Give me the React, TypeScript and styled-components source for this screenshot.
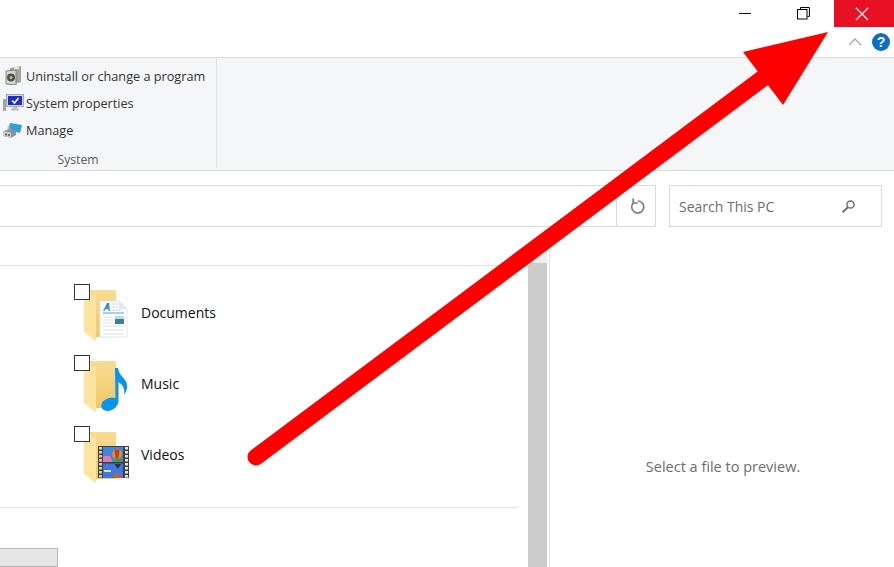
import React from "react";
import styled, { createGlobalStyle } from "styled-components";

const GlobalStyle = createGlobalStyle`
  html, body {
    margin: 0;
    padding: 0;
    background: #fff;
  }
  body {
    font-family: "Open Sans", "Noto Sans", sans-serif;
  }
`;

const App = () => (
  <Page>
    <GlobalStyle />
    <TitleBar>
      <TitleSpacer />
      <WindowButton aria-label="Minimize">
        <svg width="12" height="13" viewBox="0 0 12 13"><path d="M0 6.5h12" stroke="#000" strokeWidth="1" /></svg>
      </WindowButton>
      <WindowButton aria-label="Restore">
        <svg width="13" height="13" viewBox="0 0 13 13" fill="none" stroke="#000">
          <path d="M3.5 2.5v-2h8.900v8.900h-2" />
          <rect x="0.5" y="2.5" width="9.500" height="9.500" />
        </svg>
      </WindowButton>
      <CloseButton aria-label="Close">
        <svg width="14" height="14" viewBox="0 0 14 14"><path d="M1 1l12 12M13 1L1 13" stroke="#fff" strokeWidth="1.2" /></svg>
      </CloseButton>
      <HelpRow>
        <svg width="14" height="9" viewBox="0 0 14 9" fill="none"><path d="M1 8l6-6 6 6" stroke="#a9a9a9" strokeWidth="1.4" /></svg>
        <HelpBadge>?</HelpBadge>
      </HelpRow>
    </TitleBar>

    <Ribbon>
      <RibbonGroup>
        <RibbonRows>
          <RibbonRow><IconSlot><UninstallIcon /></IconSlot>Uninstall or change a program</RibbonRow>
          <RibbonRow><IconSlot><SystemIcon /></IconSlot>System properties</RibbonRow>
          <RibbonRow><IconSlot><ManageIcon /></IconSlot>Manage</RibbonRow>
        </RibbonRows>
        <GroupLabel>System</GroupLabel>
      </RibbonGroup>
    </Ribbon>

    <AddressRow>
      <AddressBox>
        <RefreshCell>
          <svg width="15" height="16" viewBox="0 0 15 16" fill="none" stroke="#7d7d7d" strokeWidth="1.700">
            <path d="M3.600 4.600A6 6 0 1 0 8 3" />
            <path d="M3.200 0.500V5H7.800" />
          </svg>
        </RefreshCell>
      </AddressBox>
      <SearchBox>
        <span>Search This PC</span>
        <svg width="15" height="15" viewBox="0 0 15 15" fill="none" stroke="#6e6e6e">
          <circle cx="9.500" cy="5.500" r="3.600" strokeWidth="1.500" />
          <path d="M6.800 8.200L1.600 13.400" strokeWidth="2" />
        </svg>
      </SearchBox>
    </AddressRow>

    <Body>
      <FilesPane>
        <FileSection>
          <FileItem><Check /><DocumentsIcon /><FileName>Documents</FileName></FileItem>
          <FileItem><Check /><MusicIcon /><FileName>Music</FileName></FileItem>
          <FileItem><Check /><VideosIcon /><FileName>Videos</FileName></FileItem>
        </FileSection>
        <DriveBar />
      </FilesPane>
      <Scrollbar>
        <ScrollButton />
        <ScrollThumb />
      </Scrollbar>
      <PreviewPane>Select a file to preview.</PreviewPane>
    </Body>

    <ArrowOverlay width="894" height="567" viewBox="0 0 894 567">
      <path d="M256 457L770 73" stroke="#ff0000" strokeWidth="17" strokeLinecap="round" fill="none" />
      <polygon points="828,32 743,52 783,105" fill="#ff0000" />
    </ArrowOverlay>
  </Page>
);

const FolderBase = ({ children }: { children?: React.ReactNode }) => (
  <IconSvg width="50" height="58" viewBox="0 0 50 58">
    <defs>
      <linearGradient id="folderBack" x1="0" y1="0" x2="0" y2="1">
        <stop offset="0" stopColor="#f9dc92" />
        <stop offset="1" stopColor="#eec868" />
      </linearGradient>
    </defs>
    <path d="M9 6h25a1 1 0 0 1 1 1v46H15z" fill="url(#folderBack)" />
    <path d="M3 15l12-4v46l-2-1-10-8z" fill="#fde59f" />
    {children}
  </IconSvg>
);

const DocumentsIcon = () => (
  <FolderBase>
    <path d="M19 17h19l8 8v28H19z" fill="#fff" stroke="#e1e4e7" strokeWidth="1" />
    <path d="M38 17v8h8z" fill="#e4e8ec" />
    <path d="M26 19h2l1 8h-1.500l-.3-2h-2.500l-1.200 2H22z" fill="#3d8bd8" />
    <path d="M31 20h6M31 23h6M31 26h9" stroke="#c9d6e2" strokeWidth="1" />
    <path d="M22 29h21" stroke="#4aa3e6" strokeWidth="1" />
    <path d="M22 33h10M22 36h10M22 39h10M22 42h21M22 46h21M22 50h21" stroke="#d8e2ea" strokeWidth="1" />
    <rect x="34" y="32" width="9" height="8" fill="#3e7f99" />
    <rect x="34" y="32" width="9" height="3" fill="#bcdcea" />
  </FolderBase>
);

const MusicIcon = () => (
  <FolderBase>
    <path d="M34 13h3c1 6 4 8 7 12 3 4 3 9-1 15 1-6-1-10-5.500-13v19c0 5-6 10-11 10s-7.500-4-5.500-8 8-6 13.500-5z" fill="#0a93ec" />
  </FolderBase>
);

const FILM_HOLES = [21, 25, 29, 33, 37, 41, 45, 49];

const VideosIcon = () => (
  <FolderBase>
    <rect x="17" y="20" width="31" height="32" fill="#3f3f3f" />
    {FILM_HOLES.map(y => (
      <g key={y}>
        <rect x="18" y={y} width="3" height="2.500" fill="#d5cfae" />
        <rect x="44" y={y} width="3" height="2.500" fill="#e6e6e6" />
      </g>
    ))}
    <rect x="22" y="21" width="20" height="15" fill="#3f86dc" />
    <rect x="22" y="37.500" width="20" height="14.500" fill="#3f78dc" />
    <path d="M22 30h7l3 6H22z" fill="#d97bb4" />
    <path d="M30 36l5-3h7v3z" fill="#3f9a5a" />
    <circle cx="36" cy="28" r="5" fill="#d9912c" />
    <path d="M33.500 23.500h5l-1 9h-3z" fill="#c43c2a" />
    <path d="M33.500 38h6.500l-3.200 5z" fill="#2c2f4a" />
    <path d="M31.500 52a4.500 4.500 0 0 1 9 0z" fill="#c9602a" />
    <path d="M23 44h7v2h-7z" fill="#dfe5a0" />
  </FolderBase>
);

const UninstallIcon = () => (
  <svg width="17" height="19" viewBox="0 0 17 19">
    <path d="M5 2l11-2v16l-11 3z" fill="#a4a29a" />
    <path d="M9 .800l5-.800v3l-5 .800z" fill="#e6e5e0" />
    <path d="M1 5l10-1v15L1 18z" fill="#d7d7d2" stroke="#6f6f6c" strokeWidth="0.800" />
    <circle cx="6" cy="11.500" r="4" fill="#4d5256" />
    <circle cx="6" cy="11.500" r="1.500" fill="#e2bd63" />
  </svg>
);

const SystemIcon = () => (
  <svg width="21" height="18" viewBox="0 0 21 18">
    <rect x="0" y="5" width="3" height="12" fill="#a2a6a8" />
    <rect x="0.700" y="6.500" width="1.600" height="1.600" fill="#57c84d" />
    <rect x="3.500" y="0.500" width="17" height="12" fill="#d2d5d7" stroke="#8d9396" strokeWidth="0.700" />
    <rect x="5" y="2" width="14" height="9" fill="#1a2fcf" />
    <path d="M9 6.500l2.500 2.500 4-5" stroke="#fff" strokeWidth="1.600" fill="none" />
    <path d="M10 13h4l2.500 3.500h-9z" fill="#bcc0c2" />
  </svg>
);

const ManageIcon = () => (
  <svg width="20" height="16" viewBox="0 0 20 16">
    <path d="M7 1l12 2-2 8-10-2.500z" fill="#2f9fe0" />
    <path d="M7 1L4 7l3 2z" fill="#8fb9d6" />
    <path d="M0 9l8-2 5 2v4l-5 3-8-2z" fill="#8f9294" />
    <path d="M0 9l8 1.600V16l-8-2z" fill="#c9cbcc" />
    <circle cx="3" cy="12.500" r="1" fill="#555" />
    <circle cx="6" cy="13" r="1" fill="#555" />
  </svg>
);

const Page = styled.div`
  position: relative;
  width: 894px;
  height: 567px;
  overflow: hidden;
  background: #fff;
`;

const TitleBar = styled.div`
  height: 57px;
  display: grid;
  grid-template-columns: 1fr 54px 62px 60px;
  grid-template-rows: 27px 30px;
  background: #fff;
  border-bottom: 1px solid #dadbdc;
`;

const TitleSpacer = styled.div``;

const WindowButton = styled.div`
  display: flex;
  align-items: center;
  justify-content: center;
`;

const CloseButton = styled(WindowButton)`
  background: #e81123;
  padding-right: 4px;
`;

const HelpRow = styled.div`
  grid-column: 3 / 5;
  grid-row: 2;
  display: flex;
  align-items: center;
  justify-content: flex-end;
  gap: 10px;
  padding: 0 4px 1px 0;
`;

const HelpBadge = styled.div`
  width: 18px;
  height: 18px;
  border-radius: 50%;
  background: #0b6fc6;
  color: #fff;
  font: bold 14px/18px "Liberation Sans", sans-serif;
  text-align: center;
`;

const Ribbon = styled.div`
  height: 112px;
  background: #f5f6f7;
  border-bottom: 1px solid #dadbdc;
`;

const RibbonGroup = styled.div`
  width: 216px;
  height: 108px;
  padding-top: 2px;
  border-right: 1px solid #e1e3e6;
  display: flex;
  flex-direction: column;
`;

const RibbonRows = styled.div`
  display: flex;
  flex-direction: column;
  padding: 2px 0 0 2px;
  flex: 1;
`;

const RibbonRow = styled.div`
  height: 27px;
  display: flex;
  align-items: center;
  gap: 2px;
  font-size: 12.7px;
  color: #333;
`;

const IconSlot = styled.div`
  width: 22px;
  display: flex;
  justify-content: center;
  flex: none;
`;

const GroupLabel = styled.div`
  font-size: 12.2px;
  line-height: 16px;
  color: #5c5c5c;
  text-align: center;
  width: 156px;
`;

const AddressRow = styled.div`
  height: 42px;
  padding-top: 14px;
  display: flex;
  align-items: stretch;
  gap: 13px;
`;

const AddressBox = styled.div`
  width: 656px;
  box-sizing: border-box;
  border: 1px solid #d9d9d9;
  border-left: none;
  display: flex;
  justify-content: flex-end;
`;

const RefreshCell = styled.div`
  width: 39px;
  box-sizing: border-box;
  padding-left: 2px;
  border-left: 1px solid #d9d9d9;
  display: flex;
  align-items: center;
  justify-content: center;
`;

const SearchBox = styled.div`
  width: 213px;
  box-sizing: border-box;
  border: 1px solid #d9d9d9;
  padding: 0 25px 0 9px;
  display: flex;
  align-items: center;
  justify-content: space-between;
  font-size: 14px;
  color: #6d6d6d;
`;

const Body = styled.div`
  display: flex;
  height: 340px;
`;

const FilesPane = styled.div`
  width: 528px;
  display: flex;
  flex-direction: column;
`;

const FileSection = styled.div`
  width: 518px;
  height: 243px;
  margin-top: 38px;
  border-top: 1px solid #e3e3e3;
  border-bottom: 1px solid #e3e3e3;
  padding-top: 18px;
  box-sizing: border-box;
  display: flex;
  flex-direction: column;
  gap: 15px;
`;

const FileItem = styled.div`
  position: relative;
  height: 56px;
  display: flex;
  align-items: center;
  padding-left: 81px;
  gap: 10px;
`;

const Check = styled.div`
  position: absolute;
  left: 74px;
  top: 0;
  width: 16px;
  height: 16px;
  box-sizing: border-box;
  border: 1px solid #333;
  background: #fff;
  z-index: 1;
`;

const IconSvg = styled.svg`
  flex: none;
  align-self: flex-start;
`;

const FileName = styled.span`
  font-size: 14px;
  color: #111;
`;

const DriveBar = styled.div`
  width: 58px;
  height: 19px;
  margin-top: 40px;
  box-sizing: border-box;
  background: #e6e6e6;
  border: 1px solid #b5b5b5;
  border-left: none;
`;

const Scrollbar = styled.div`
  width: 21px;
  border-right: 1px solid #e6e6e6;
  padding-top: 18px;
  display: flex;
  flex-direction: column;
`;

const ScrollButton = styled.div`
  width: 19px;
  height: 18px;
  background: #f0f0f0;
  flex: none;
`;

const ScrollThumb = styled.div`
  width: 19px;
  flex: 1;
  background: #cdcdcd;
`;

const PreviewPane = styled.div`
  flex: 1;
  display: flex;
  justify-content: center;
  padding: 230px 0 0 2px;
  font-size: 14.5px;
  color: #6d6d6d;
`;

const ArrowOverlay = styled.svg`
  position: absolute;
  left: 0;
  top: 0;
  pointer-events: none;
`;

export default App;
